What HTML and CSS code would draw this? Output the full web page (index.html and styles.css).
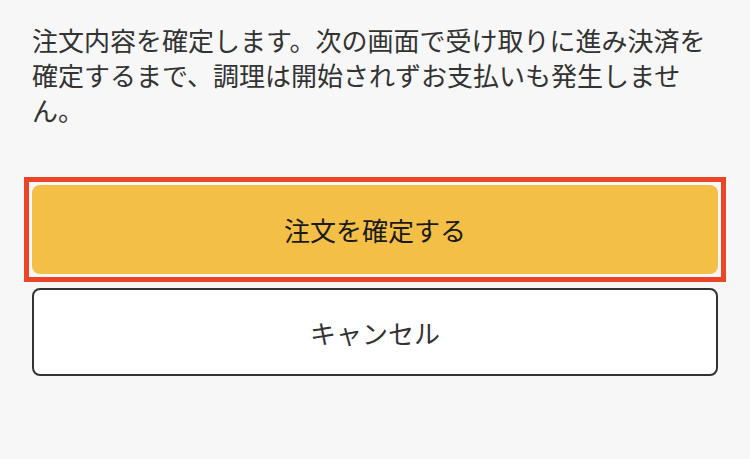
FILE: index.html
```html
<html>
	<head>
		<meta charset="utf-8">
		<meta name="viewport" content="width=device-width, initial-scale=1.0">
		<link rel="stylesheet" href="styles.css">
	</head>

	<body>
		<div class="confirm">
			<p class="notice">注文内容を確定します。次の画面で受け取りに進み決済を確定するまで、調理は開始されずお支払いも発生しません。</p>

			<div class="highlight">
				<button class="button primary">注文を確定する</button>
			</div>

			<button class="button secondary">キャンセル</button>
		</div>
	</body>
</html>
```

FILE: styles.css
```css
body {
	margin: 0;
	background-color: #f7f7f7;
	font-family: "Noto Sans CJK JP", "Noto Sans", sans-serif;
	color: #333;
}

.confirm {
	padding: 22px 32px 0 32px;
	display: flex;
	flex-direction: column;
}

.notice {
	margin: 0;
	font-size: 26px;
	line-height: 35px;
	line-break: strict;
}

.highlight {
	margin: 50px -8px 0 -8px;
	border: 5px solid #ec4427;
	padding: 3px;
}

.button {
	display: block;
	width: 100%;
	font-family: inherit;
	font-size: 26px;
	border-radius: 8px;
	cursor: pointer;
}

.primary {
	height: 89px;
	background-color: #f4bf46;
	border: none;
	color: #1a1a1a;
}

.secondary {
	margin-top: 6px;
	height: 88px;
	background-color: #fff;
	border: 2px solid #333;
	color: #333;
}
```
